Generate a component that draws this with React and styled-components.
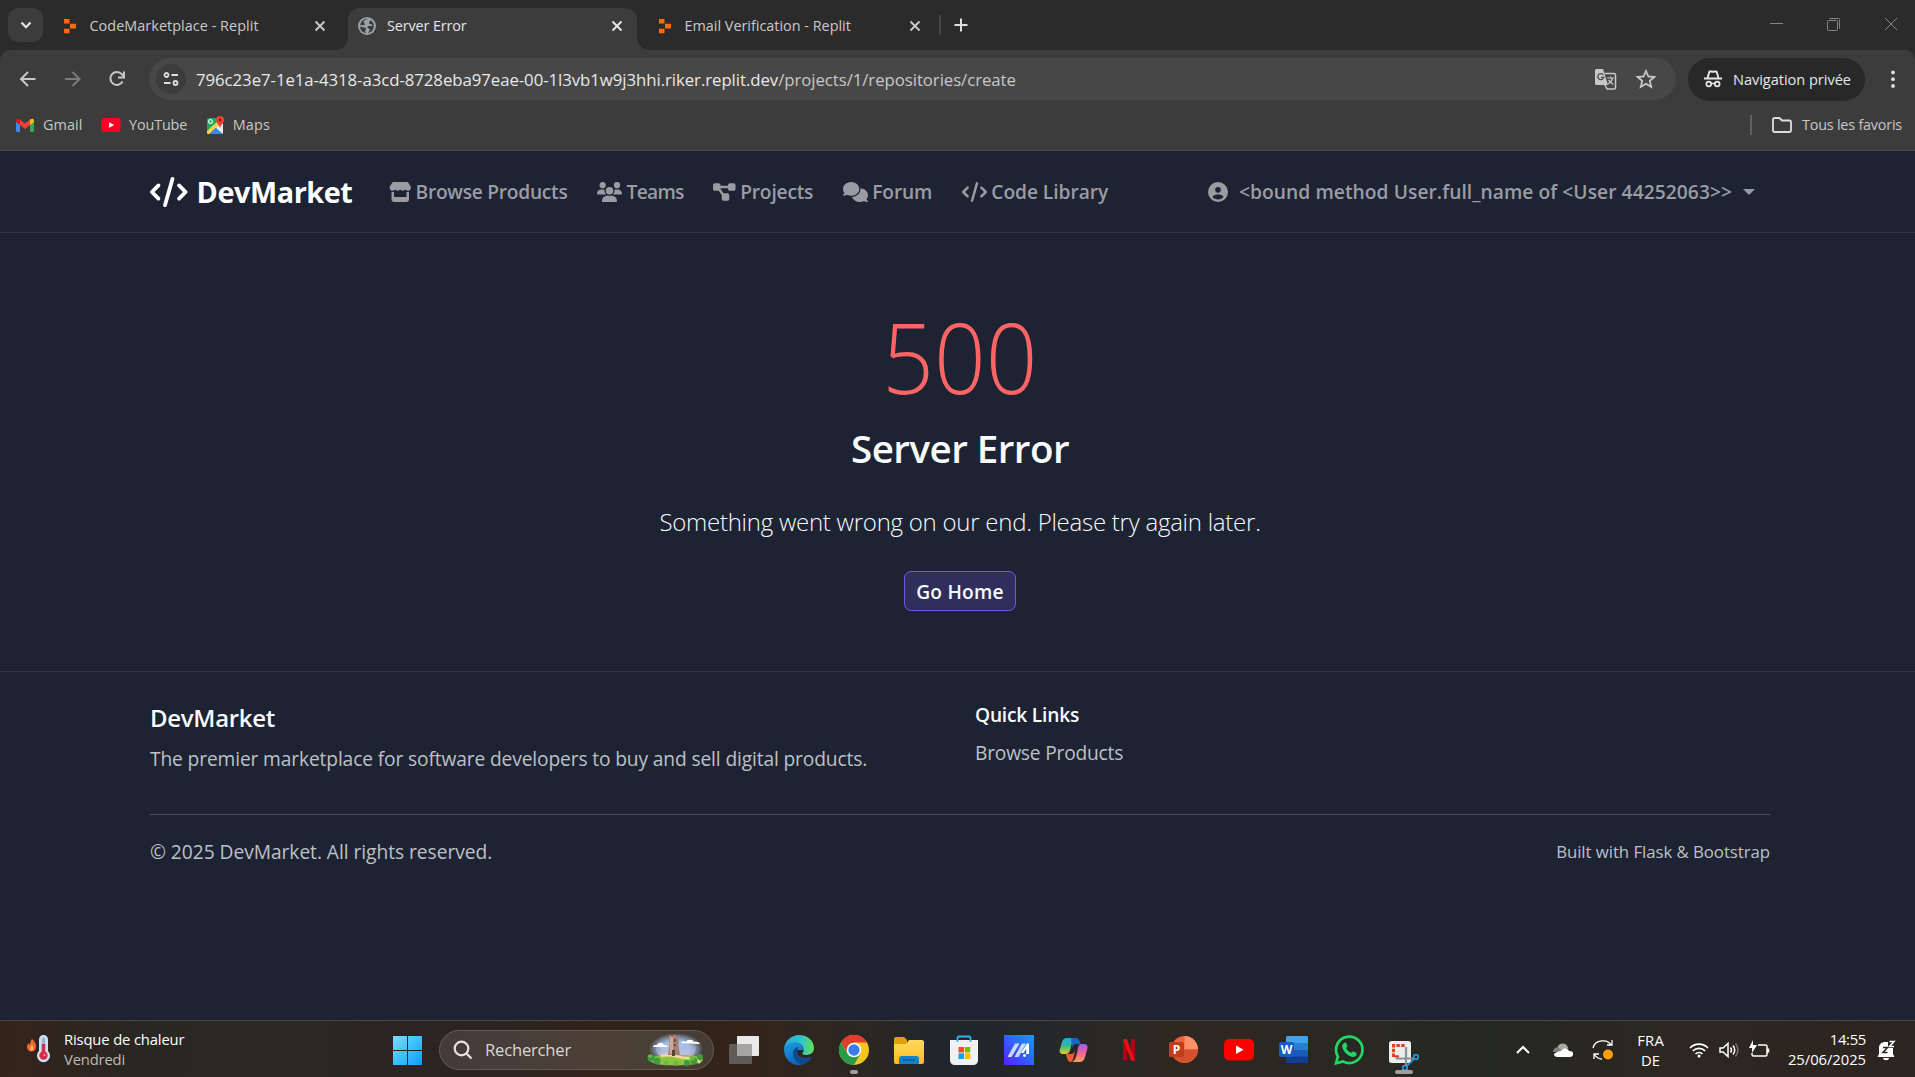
import React from "react";
import styled, { createGlobalStyle, css } from "styled-components";
import { FaCode, FaStore, FaUsers, FaDiagramProject, FaComments, FaCircleUser } from "react-icons/fa6";

const Global = createGlobalStyle`
  * { box-sizing: border-box; }
  body { margin: 0; background: #1d2333; font-family: "Open Sans", "Noto Sans", sans-serif; overflow: hidden; }
  svg { display: block; flex: none; }
`;
const type = (size, line, weight = 400, spacing = 0) => css`
  font-size: ${size}px; line-height: ${line}px; font-weight: ${weight}; letter-spacing: ${spacing}px; white-space: nowrap;
`;
const Label = styled.span`letter-spacing: ${p => p.$ls || 0}px;`;

const Screen = styled.div`width: 1915px; height: 1077px; display: flex; flex-direction: column;`;

/* browser chrome */
const TabStrip = styled.div`height: 50px; background: #2b2b2b; display: flex; padding: 8px 16px 0 8px;`;
const TabSearch = styled.div`width: 35px; height: 34px; border-radius: 10px; background: #3c3c3c; display: grid; place-items: center; margin-right: 7.5px;`;
const Tabs = styled.div`display: flex; gap: 8.5px;`;
const Tab = styled.div`
  width: 289px; height: 42px; padding: 0 12px 7px 10px; display: flex; align-items: center; gap: 11px; position: relative;
  border-radius: 12px 12px 0 0; color: ${p => (p.$active ? "#e6e6e6" : "#c9c9c9")};
  ${p => p.$active && css`
    background: #3c3c3c;
    &::before, &::after { content: ""; position: absolute; bottom: 0; width: 12px; height: 12px; }
    &::before { left: -12px; background: radial-gradient(circle at 0 0, transparent 11.5px, #3c3c3c 12px); }
    &::after { right: -12px; background: radial-gradient(circle at 100% 0, transparent 11.5px, #3c3c3c 12px); }
  `}
`;
const TabTitle = styled.span`flex: 1; min-width: 0; ${p => type(14.4, 20, 400, p.$ls)}`;
const TabDivider = styled.div`width: 2px; height: 20px; margin: 7px 12px 0 4px; background: #454545;`;
const NewTab = styled.div`padding-top: 9px;`;
const WindowControls = styled.div`margin-left: auto; display: flex; gap: 41px; padding-top: 8px;`;

const ToolbarBase = styled.div`background: #2b2b2b;`;
const Toolbar = styled.div`height: 58px; background: #3c3c3c; display: flex; align-items: center; padding: 0 14px 0 18px; border-radius: 10px 10px 0 0;`;
const NavButtons = styled.div`display: flex; gap: 24.5px; width: 131px; color: #c7c7c7;`;
const Omnibox = styled.div`width: 1527px; height: 42px; border-radius: 21px; background: #474747; display: flex; align-items: center; padding: 0 19px 0 7px; color: #c7c7c7;`;
const SiteInfo = styled.div`width: 30px; height: 30px; border-radius: 50%; background: #3c3c3c; display: grid; place-items: center; margin-right: 10px;`;
const Url = styled.span`flex: 1; padding-top: 1px; ${type(16.8, 24, 400, -0.06)} color: #c7c7c7;`;
const Host = styled.span`color: #e8e8e8;`;
const OmniActions = styled.div`display: flex; gap: 18px; align-items: center;`;
const PrivateChip = styled.div`width: 177px; height: 43px; border-radius: 22px; background: #282828; margin-left: 12px; padding-left: 15px; display: flex; align-items: center; gap: 10px; color: #e6e6e6; ${type(14.6, 20, 400, 0)}`;
const MenuDots = styled.div`margin-left: auto;`;
const Bookmarks = styled.div`height: 43px; background: #3c3c3c; border-bottom: 1px solid #4a4b48; display: flex; padding: 6px 13px 0 15px; color: #c7c7c7;`;
const Bookmark = styled.div`display: flex; align-items: center; height: 22px; gap: 8px; margin-right: 18.5px; ${type(14.4, 20, 400, 0)}`;
const AllBookmarks = styled.div`margin-left: auto; display: flex; align-items: center; height: 22px; gap: 9px; ${type(14.4, 20, 400, 0)}
  &::before { content: ""; width: 2px; height: 20px; background: #5f5f5f; margin-right: 10px; }`;

/* site */
const Site = styled.div`flex: 1; background: #1d2333; color: #f8fafc; display: flex; flex-direction: column;`;
const Navbar = styled.nav`height: 82px; border-bottom: 1px solid #323746; padding: 0 160px 0 150px; display: flex; align-items: center;`;
const Brand = styled.div`display: flex; align-items: center; gap: 9px; color: #fff; width: 238.5px; ${type(28.8, 36, 700, -0.42)}
  svg { width: 37.5px; height: 30px; }`;
const NavItem = styled.div`display: flex; align-items: center; gap: 4.5px; color: #9b9ca3; margin-right: 29.5px; ${p => type(19.2, 30, 600, p.$ls)}
  svg { width: ${p => p.$icon}px; height: 20px; }`;
const UserMenu = styled(NavItem)`margin: 0 0 0 auto; gap: 11px;`;
const Caret = styled.i`border: 6px solid transparent; border-top-color: currentColor; border-bottom: 0;`;
const Hero = styled.main`height: 438px; display: flex; flex-direction: column; align-items: center; padding-left: 5px;`;
const Code = styled.h1`margin: 63px 0 0; color: #ff6464; transform: scaleX(0.925); ${type(98, 120, 300, 0)}`;
const Title = styled.h2`margin: 8px 0 0; ${type(38.6, 48, 600, -0.55)}`;
const Lead = styled.p`margin: 31px 0 0; ${type(24, 38, 300, -0.25)}`;
const HomeButton = styled.button`margin: 30px 0 0; width: 112px; height: 40px; padding: 1px 0 0; border: 1px solid #7158ec; border-radius: 7px; background: #302e5b; color: #f8fafc; font-family: inherit; ${type(19.2, 37, 600, 0.2)}`;
const Footer = styled.footer`border-top: 1px solid #323746; padding: 30px 145px 0 150px; color: #bdc0c6;`;
const Columns = styled.div`display: grid; grid-template-columns: 825px 1fr; height: 112px;`;
const FootBrand = styled.h5`margin: 0; color: #f8fafc; ${type(24, 32, 600, -0.3)}`;
const FootText = styled.p`margin: 10px 0 0; ${type(19.2, 30, 400, -0.13)}`;
const FootHead = styled.h6`margin: 0; color: #f8fafc; ${type(19.2, 26, 600, -0.22)}`;
const FootLink = styled.a`display: block; margin-top: 10px; ${type(19.2, 30, 400, -0.2)}`;
const Legal = styled.div`border-top: 1px solid #4b505d; display: flex; justify-content: space-between; padding-top: 22px; ${type(19.2, 30, 400, -0.04)}`;
const Built = styled.small`${type(16.8, 30, 400, -0.05)}`;

/* taskbar */
const Taskbar = styled.div`height: 57px; border-top: 1px solid #4b4641; display: flex; align-items: center; padding: 2px 19px 0 26px; color: #fff;
  background: linear-gradient(90deg, #35231a 0, #292723 7%, #2b2822 14%, #2a2424 22%, #32231b 31%, #33241a 39%, #2a2723 46%, #20262b 49%, #24272a 54%, #2e2821 61%, #292822 72%, #252721 78%, #2d2721 88%, #2b2421 100%);`;
const Weather = styled.div`display: flex; width: 367px; gap: 12px; align-items: center; padding-bottom: 2px;`;
const Stack = styled.div`${type(14.8, 20, 400, 0)} text-align: ${p => p.$align || "left"}; color: #fff;`;
const Clock = styled(Stack)`padding-bottom: 2px;`;
const Muted = styled.div`color: #bebab5;`;
const SearchBox = styled.div`width: 275px; height: 40px; border-radius: 20px; margin: 0 15px 0 17px; padding: 0 9px 0 13px; display: flex; align-items: center; border: 1px solid #665a55;
  background: linear-gradient(90deg, #443b3a, #4c4036 60%, #453c33); color: #d9d6d3; ${type(16.6, 24, 400, -0.2)}`;
const SearchText = styled.span`margin-left: 12px; flex: 1;`;
const Dock = styled.div`display: flex; gap: 25px;`;
const DockItem = styled.div`width: 30px; height: 30px; position: relative;
  ${p => p.$dot && css`&::after { content: ""; position: absolute; top: 35px; left: ${(30 - p.$dot) / 2}px; width: ${p.$dot}px; height: 4px; border-radius: 2px; background: #a09d9b; }`}`;
const Tray = styled.div`margin-left: auto; display: flex; align-items: center;`;
const Gap = styled.div`width: ${p => p.$w}px;`;
const Status = styled.div`display: flex; gap: 10px;`;

const Svg = ({ w = 16, h = w, box, children, ...r }) => <svg width={w} height={h} viewBox={box || `0 0 ${w} ${h}`} fill="none" {...r}>{children}</svg>;
const Close = () => <Svg w={16} stroke="currentColor" strokeWidth="1.9"><path d="M3.500 3.500l9 9M12.500 3.500l-9 9" /></Svg>;
const Replit = () => <Svg w={18}><path fill="#ff6a0a" d="M3 2h5.500v4.500H3zM9 6.800h6v4.600H9zM3 11.700h5.500v4.500H3z" /></Svg>;
const Globe = () => <Svg w={18}><circle cx="9" cy="9" r="9" fill="#9aa0a6" /><path fill="#3c3c3c" d="M10.500 2c-2 .2-4.500 1-4.800 2.400-.2 1.500 1.200 2 1.200 3C6 8.600 3.600 8 2 8a7.200 7.200 0 0 1 8.500-6zM2 9.500c2 1.200 5.500.3 6 2 .5 1.200-1 1.600-.9 2.700.1.900.8 1.300.7 2A7.200 7.200 0 0 1 2 9.500zM12.500 3a7.200 7.200 0 0 1-2.200 13c-.3-1.200 1.700-1.700 1.500-3.200-.2-1.300-2.300-1.200-2.300-2.600 0-1.700 2.500-1.300 3.800-1.100.9.100 1.400-.4.900-1.200-.7-1-3.200-.2-3.300-1.900 0-1.300 1.400-1.600 1.600-3z" /></Svg>;
const YouTube = ({ w, h }) => <Svg w={w} h={h} box="0 0 30 22"><rect width="30" height="22" rx="5" fill="#ff0022" /><path d="M12 6.500v9l8-4.500z" fill="#fff" /></Svg>;
const Gmail = () => <Svg w={20} h={16}><path fill="#4285f4" d="M1 4v9.500c0 .8.6 1.500 1.500 1.500H5V6z" /><path fill="#34a853" d="M15 6v9h2.500c.9 0 1.500-.7 1.500-1.500V4z" /><path fill="#ea4335" d="M5 2.500l5 4 5-4V8l-5 4-5-4z" /><path fill="#c5221f" d="M1 3.500c0-2 2.200-2.300 4-1V8L1 5z" /><path fill="#fbbc04" d="M19 3.500c0-2-2.200-2.300-4-1V8l4-3z" /></Svg>;
const Maps = () => <Svg w={19} h={20}><clipPath id="mp"><rect x="1" y="3" width="16" height="16" rx="1.500" /></clipPath><g clipPath="url(#mp)"><path fill="#1fa463" d="M0 2h18v18H0z" /><path fill="#e8eaed" d="M11 11l7-3v12l-8-7z" /><path fill="#ffd24a" d="M0 17L13 5l3 2L2 20H0z" /><path fill="#4285f4" d="M3 20l7-7 7 7z" /></g><circle cx="4.500" cy="6.500" r="1.900" stroke="#dff3e6" strokeWidth="1.200" /><path fill="#ea4335" d="M14 1a4 4 0 0 0-4 4c0 3 3 4.500 4 8 1-3.500 4-5 4-8a4 4 0 0 0-4-4z" /><circle cx="14" cy="5" r="1.400" fill="#811411" /></Svg>;

const Castle = () => <Svg w={57} h={32}>
  <defs><radialGradient id="sky"><stop offset=".5" stopColor="#a9c6e8" /><stop offset=".8" stopColor="#8aa6c8" stopOpacity=".6" /><stop offset="1" stopColor="#8aa6c8" stopOpacity="0" /></radialGradient><linearGradient id="dusk" y2="1" x2="0"><stop stopColor="#7faee0" stopOpacity="0" /><stop offset="1" stopColor="#e5bfe3" /></linearGradient></defs>
  <ellipse cx="29" cy="15" rx="27" ry="16" fill="url(#sky)" /><ellipse cx="29" cy="15" rx="20" ry="12" fill="url(#dusk)" />
  <path fill="#fff" d="M6 13c0-2 3-2 4-2 1-3 6-3 7 0 2 0 4 1 4 2zM34 9c1-2 3-2 5-1 1-3 7-3 8 0 3-.5 5 0 6 2z" />
  <ellipse cx="29" cy="26" rx="27" ry="5.500" fill="#8fc23c" /><path d="M14 22c10-3 18 2 25 2s12 2 14 5" stroke="#f1d9a4" strokeWidth="2.500" />
  <path fill="#a77f72" d="M22 1h2v1.500h2V1h3v1.500h2V1h1l-.5 10 1.500 10H21l1.500-10z" /><path fill="#d0a796" d="M23 3h3v17h-3z" /><path fill="#5d4038" d="M25 16h3v6h-3zM27 5h1.500v3H27zM27 10h1.500v2H27z" />
  <g fill="#3f9b3f"><circle cx="4" cy="24" r="3.500" /><circle cx="10" cy="27" r="3.500" /><circle cx="40" cy="29" r="3" /><circle cx="47" cy="27" r="3.500" /><circle cx="53" cy="23" r="3" /></g>
  <g fill="#6dbb45"><circle cx="19" cy="29" r="2.500" /><circle cx="29" cy="29" r="2.500" /><circle cx="45" cy="24" r="2.500" /><circle cx="3" cy="22" r="1.800" /></g></Svg>;

const dock = [
  ["task"], ["edge"], ["chrome", 8], ["files"], ["store"], ["asus"], ["copilot"], ["netflix"], ["ppt"], ["yt"], ["word"], ["wa"], ["snip", 18],
];
const art = {
  task: <><rect x="8" y="1" width="22" height="20" rx="1" fill="#e9e9e9" /><rect x="0" y="9" width="23" height="20" rx="1.500" fill="#5e5b59" /><path d="M8 9h15v12H8z" fill="#a6a5a4" /></>,
  edge: <><defs><linearGradient id="e1" x2="1"><stop stopColor="#2aa5dd" /><stop offset=".55" stopColor="#2fc3d0" /><stop offset="1" stopColor="#63e04f" /></linearGradient><linearGradient id="e2" x2=".4" y2="1"><stop stopColor="#1b9de2" /><stop offset="1" stopColor="#0f63bd" /></linearGradient></defs>
    <path fill="url(#e2)" d="M0 14C1 9 5 7 10 7c6 0 9 4 9 8H12c-1 6 6 10 15 7-3 5-7 8-12 8C6 30 0 23 0 14z" /><path fill="#104a8c" d="M13 12c-7 3-4 16 5 17.500 4-.5 8-4 10-7-.5-1-8 3-13-1.500-2-2-2.500-6-.5-8z" /><path fill="url(#e1)" d="M0 14C1 5 8 0 15 0c9 0 15 6 15 13 0 5-4 7-8 7-3 0-4-1-3.500-2 2-2 1-6-1-8C13 6 4 6 0 14z" /></>,
  chrome: <><circle cx="15" cy="15" r="15" fill="#fcc31e" /><path fill="#e33b2e" d="M2 7.500A15 15 0 0 1 28 7.500H15L8.500 18z" /><path fill="#2a9b49" d="M2 7.500A15 15 0 0 0 15 30l6.500-11.500L15 22l-6.500-3.500z" /><circle cx="15" cy="15" r="7.300" fill="#fff" /><circle cx="15" cy="15" r="5.700" fill="#3b7cec" /></>,
  files: <><path fill="#e0a106" d="M0 4c0-1 .7-2 2-2h8l3 3v6H0z" /><path fill="url(#fg)" d="M0 9h12l3-4h13c1.300 0 2 1 2 2v20c0 1-.7 2-2 2H2c-1.300 0-2-1-2-2z" /><defs><linearGradient id="fg" x2="0" y2="1"><stop stopColor="#ffd95c" /><stop offset="1" stopColor="#fcbd1f" /></linearGradient></defs><path fill="#1480d0" d="M5 29v-5c0-2 1-3 3-3h14c2 0 3 1 3 3v5z" /><path stroke="#0b4f8e" strokeWidth="1.200" d="M9 25h12" /></>,
  store: <><path d="M8.500 7V3c0-1 .5-1.500 1.500-1.500h10c1 0 1.500.5 1.500 1.500v4" stroke="#35b4e8" strokeWidth="1.800" /><path fill="#f1f1f1" d="M1 5h28v20c0 3-2 5-5 5H6c-3 0-5-2-5-5z" /><path d="M8.500 5v2M21.500 5v2" stroke="#35b4e8" strokeWidth="1.800" /><path fill="#f04f22" d="M9.500 12H15v5.500H9.500z" /><path fill="#7fba00" d="M15.800 12h5.500v5.500h-5.500z" /><path fill="#00a3ee" d="M9.500 18.300H15V24H9.500z" /><path fill="#ffb900" d="M15.800 18.300h5.500V24h-5.500z" /></>,
  asus: <><defs><linearGradient id="ag" x1="0" y1="1" x2="1" y2="0"><stop stopColor="#5a1dff" /><stop offset=".5" stopColor="#3160ff" /><stop offset="1" stopColor="#129cff" /></linearGradient></defs><path fill="url(#ag)" d="M0 0h30v30H0z" /><path fill="#cdd8ff" d="M3.500 22L11 8.500h4.500L7.500 22zM10.500 22L18 8.500h4L14.500 22z" /><path fill="#fff" d="M17 18l6-9.500h2V19h-2.800v-5.500L19.500 18z" /><circle cx="20.500" cy="20.500" r="1.400" fill="#fff" /></>,
  copilot: <><defs><linearGradient id="c1" x2="0" y2="1"><stop stopColor="#20a7f0" /><stop offset=".5" stopColor="#35bd8c" /><stop offset="1" stopColor="#eecb25" /></linearGradient><linearGradient id="c2" x2="0" y2="1"><stop stopColor="#a05ae8" /><stop offset=".5" stopColor="#ef659a" /><stop offset="1" stopColor="#ff9b53" /></linearGradient></defs><path fill="url(#c1)" d="M8 3h9c-3 1-4 5-5 9s-2 7-5 7H5c-4 0-5-2-4-5l2-7c1-3 2-4 5-4z" /><path fill="#1767c9" d="M12 3h5c2 0 3 1 4 4l.5 2H17c-3 0-3 2-4 4z" /><path fill="url(#c2)" d="M22 9h3c4 0 4 3 3 6l-2 7c-1 4-3 5-6 5h-7c3-1 4-5 5-9s1-9 4-9z" /><path fill="#ef5a35" d="M7 19h4c4 0 4-2 5-3l-1 5c-1 4-2 6-3 6-2 0-3-1-4-4z" /></>,
  netflix: <><path fill="#a50913" d="M9 4h4v21l-4 1zM17 4h4v22l-4-1z" /><path fill="#f00b18" d="M9 4h4l8 22-4-.7z" /></>,
  ppt: <><circle cx="15.500" cy="14.500" r="13.500" fill="#e9633f" /><path fill="#ff9169" d="M15.500 1A13.500 13.500 0 0 1 29 14.500H15.500z" /><path fill="#d5512c" d="M29 14.500a13.500 13.500 0 0 1-24 8l10.500-8z" /><rect y="7" width="15" height="15" rx="1.500" fill="#c43e1c" /></>,
  yt: <><rect y="4" width="30" height="21.500" rx="5" fill="#f00" /><path d="M12 10.500v8.500l7.500-4.250z" fill="#fff" /></>,
  word: <><rect x="7" y="1" width="22" height="27" rx="1.500" fill="#103f91" /><path fill="#3fa4ea" d="M7 2.500C7 1.500 8 1 9 1h18.500c1 0 1.500.5 1.500 1.500V8H7z" /><path fill="#2b7cd3" d="M7 8h22v7H7z" /><path fill="#185abd" d="M7 15h22v6.500H7z" /><rect y="7" width="15" height="15" rx="1.500" fill="#185abd" /></>,
  wa: <><path d="M2 28.300l1.900-6.800A13.200 13.200 0 1 1 9 26.400z" stroke="#25d366" strokeWidth="2.700" /><path fill="#25d366" d="M10 8c1-1 2-.7 2.400.2l1 2.500c.3.800-1.300 2-1.200 2.500 1.100 2.200 2.800 3.700 5 4.600.6.200 1.500-1.700 2.200-1.400l2.800 1.400c1 .5.300 2.700-.7 3.400-2.500 1.800-6 .2-8.800-2.200-2.600-2.300-4.700-5.500-4.500-8 .1-1.200.8-2.200 1.800-3z" /></>,
};
const Letter = styled.b`position: absolute; left: 0; top: 7px; width: 15px; text-align: center; ${type(12, 15, 700, 0)}`;
const Snip = () => <Svg w={30} h={37}><rect y="6" width="22" height="22" rx="2.500" fill="#ededed" /><path d="M4.500 22V10.500H16" stroke="#e0431b" strokeWidth="3" strokeDasharray="3.500 1.300" /><path d="M6 21.500h4" stroke="#e0431b" strokeWidth="2.500" /><path d="M17 12v18M7 23.500h17" stroke="#8d9298" strokeWidth="2.200" /><circle cx="27" cy="22" r="2.300" stroke="#2299e0" strokeWidth="1.700" /><circle cx="16" cy="33" r="2.300" stroke="#2299e0" strokeWidth="1.700" /><path d="M18 31l7-7" stroke="#2299e0" strokeWidth="1.700" /></Svg>;

export default function App() {
  return (
    <Screen>
      <Global />
      <TabStrip>
        <TabSearch><Svg w={14} stroke="#e3e3e3" strokeWidth="2.200"><path d="M2.500 4.500L7 9.200l4.500-4.700" /></Svg></TabSearch>
        <Tabs>
          <Tab><Replit /><TabTitle $ls={0.05}>CodeMarketplace - Replit</TabTitle><Close /></Tab>
          <Tab $active><Globe /><TabTitle $ls={-0.12}>Server Error</TabTitle><Close /></Tab>
          <Tab><Replit /><TabTitle $ls={0}>Email Verification - Replit</TabTitle><Close /></Tab>
        </Tabs>
        <TabDivider />
        <NewTab><Svg w={16} stroke="#dedede" strokeWidth="2"><path d="M8 1.500v13M1.500 8h13" /></Svg></NewTab>
        <WindowControls>
          <Svg w={16} stroke="#858585"><path d="M1 7.500h13" /></Svg>
          <Svg w={16} stroke="#858585"><rect x="1.500" y="4.500" width="10" height="10" rx="1" /><path d="M3.500 2.500h9a1 1 0 0 1 1 1v9" /></Svg>
          <Svg w={16} stroke="#858585"><path d="M2 2l12 12M14 2L2 14" /></Svg>
        </WindowControls>
      </TabStrip>
      <ToolbarBase>
        <Toolbar>
          <NavButtons>
            <Svg w={20} stroke="#c7c7c7" strokeWidth="2"><path d="M17.500 10H3.500M10 3L3 10l7 7" /></Svg>
            <Svg w={20} stroke="#7b7b7b" strokeWidth="2"><path d="M2 10h14.500M9.500 3l7 7-7 7" /></Svg>
            <Svg w={20} stroke="#c7c7c7" strokeWidth="2"><path d="M15.600 12.500a6.500 6.500 0 1 1-.8-7.300l1.500 1.800" /><path d="M17 2.500v6h-6" /></Svg>
          </NavButtons>
          <Omnibox>
            <SiteInfo><Svg w={18} stroke="#dedede" strokeWidth="1.800"><circle cx="4.500" cy="5" r="2" /><path d="M9.500 5H16M2 13h6.500" /><circle cx="13.500" cy="13" r="2" /></Svg></SiteInfo>
            <Url><Host>796c23e7-1e1a-4318-a3cd-8728eba97eae-00-1l3vb1w9j3hhi.riker.replit.dev</Host>/projects/1/repositories/create</Url>
            <OmniActions>
              <Svg w={23}><path fill="#c7c7c7" d="M2.500 1H9l5 16H2.500A1.500 1.500 0 0 1 1 15.500v-13A1.500 1.500 0 0 1 2.500 1z" /><path d="M10.500 5.500H20A1.500 1.500 0 0 1 21.500 7v12.500A1.500 1.500 0 0 1 20 21h-7l-2-4" stroke="#c7c7c7" strokeWidth="1.500" /><path d="M9.300 7a3 3 0 1 0 .4 2.400H7" stroke="#474747" strokeWidth="1.300" /><path d="M13 10h7M16.500 8.500V10M18.500 10c-.7 3-2.500 4.800-4.500 6M14.500 12l4.500 4.500" stroke="#c7c7c7" strokeWidth="1.200" /></Svg>
              <Svg w={22} stroke="#c7c7c7" strokeWidth="1.800"><path d="M11 3l2.400 5.500 6 .5-4.600 3.900 1.400 5.900L11 15.700l-5.200 3.100 1.400-5.900L2.600 9l6-.5z" /></Svg>
            </OmniActions>
          </Omnibox>
          <PrivateChip>
            <Svg w={20}><path d="M1 9.500h18" stroke="#e6e6e6" strokeWidth="2" /><path d="M4.500 9L6.500 2.500c1-.6 2 .3 3.500.3s2.500-.9 3.500-.3L15.500 9" stroke="#e6e6e6" strokeWidth="1.900" /><circle cx="5.800" cy="15" r="2.400" stroke="#e6e6e6" strokeWidth="1.700" /><circle cx="14.200" cy="15" r="2.400" stroke="#e6e6e6" strokeWidth="1.700" /><path d="M8 14.500h4" stroke="#e6e6e6" strokeWidth="1.500" /></Svg>
            <Label $ls={-0.05}>Navigation privée</Label>
          </PrivateChip>
          <MenuDots><Svg w={16} h={20}><g fill="#dedede"><circle cx="8" cy="3.500" r="1.900" /><circle cx="8" cy="10.200" r="1.900" /><circle cx="8" cy="17" r="1.900" /></g></Svg></MenuDots>
        </Toolbar>
      </ToolbarBase>
      <Bookmarks>
        <Bookmark><Gmail /><Label $ls={0.1}>Gmail</Label></Bookmark>
        <Bookmark><YouTube w={20} h={14} /><Label $ls={-0.15}>YouTube</Label></Bookmark>
        <Bookmark><Maps /><Label $ls={0.2}>Maps</Label></Bookmark>
        <AllBookmarks><Svg w={22} h={18} stroke="#dedede" strokeWidth="1.800"><path d="M2 14.500v-11C2 2.500 2.500 2 3.500 2h5l2.500 2.500h7.500c1 0 1.500.5 1.500 1.500v8.500c0 1-.5 1.500-1.500 1.500h-15C2.500 16 2 15.500 2 14.500z" /></Svg><Label $ls={-0.21}>Tous les favoris</Label></AllBookmarks>
      </Bookmarks>
      <Site>
        <Navbar>
          <Brand><FaCode /><span>DevMarket</span></Brand>
          <NavItem $icon={22.5} $ls={-0.27}><FaStore /><span>Browse Products</span></NavItem>
          <NavItem $icon={25} $ls={-0.7}><FaUsers /><span>Teams</span></NavItem>
          <NavItem $icon={22.5} $ls={-0.2}><FaDiagramProject /><span>Projects</span></NavItem>
          <NavItem $icon={25} $ls={-0.14}><FaComments /><span>Forum</span></NavItem>
          <NavItem $icon={25} $ls={-0.05}><FaCode /><span>Code Library</span></NavItem>
          <UserMenu $icon={20} $ls={0.067}><FaCircleUser /><span>{"<bound method User.full_name of <User 44252063>>"}</span><Caret /></UserMenu>
        </Navbar>
        <Hero>
          <Code>500</Code>
          <Title>Server Error</Title>
          <Lead>Something went wrong on our end. Please try again later.</Lead>
          <HomeButton>Go Home</HomeButton>
        </Hero>
        <Footer>
          <Columns>
            <div><FootBrand>DevMarket</FootBrand><FootText>The premier marketplace for software developers to buy and sell digital products.</FootText></div>
            <div><FootHead>Quick Links</FootHead><FootLink>Browse Products</FootLink></div>
          </Columns>
          <Legal><span>© 2025 DevMarket. All rights reserved.</span><Built>Built with Flask &amp; Bootstrap</Built></Legal>
        </Footer>
      </Site>
      <Taskbar>
        <Weather>
          <Svg w={26} h={30}><path fill="#ef6a32" d="M6 5c3 2 4 5 4 8a4.500 4.500 0 0 1-9 0c0-2 1-3 2-4 0 1 .6 1.500 1 1.500C4.500 8 4.500 7 6 5z" /><path fill="#ffb95c" d="M6 11c1.500 1.500 2 5-.5 5.500C3 16 4 13 6 11z" /><path fill="#cfe2f5" d="M13 5.500a4.500 4.500 0 0 1 9 0V17a6.500 6.500 0 1 1-9 0z" /><path stroke="#97b5d0" strokeWidth="3.500" strokeLinecap="round" d="M17.500 5v10" /><path stroke="#d52b49" strokeWidth="3.500" d="M17.500 10v11" /><circle cx="17.500" cy="21.500" r="4.200" fill="#d52b49" /><circle cx="18.500" cy="21" r="1" fill="#ff9aac" /></Svg>
          <Stack><div><Label $ls={-0.15}>Risque de chaleur</Label></div><Muted><Label $ls={-0.17}>Vendredi</Label></Muted></Stack>
        </Weather>
        <Svg w={29}><defs><linearGradient id="wn" x2="1" y2="1"><stop stopColor="#7fdcff" /><stop offset=".5" stopColor="#3cc1fb" /><stop offset="1" stopColor="#1399fa" /></linearGradient></defs><path fill="url(#wn)" d="M0 0h14v14H0zM15 0h14v14H15zM0 15h14v14H0zM15 15h14v14H15z" /></Svg>
        <SearchBox>
          <Svg w={20} stroke="#e6e4e2" strokeWidth="2.200"><circle cx="8.500" cy="8.500" r="6.800" /><path d="M13.500 13.500l5 5" /></Svg>
          <SearchText>Rechercher</SearchText><Castle />
        </SearchBox>
        <Dock>
          {dock.map(([id, dot]) => <DockItem key={id} $dot={dot}>{id === "snip" ? <Snip /> : <Svg w={30}>{art[id]}</Svg>}{id === "ppt" && <Letter>P</Letter>}{id === "word" && <Letter>W</Letter>}</DockItem>)}
        </Dock>
        <Tray>
          <Svg w={16} stroke="#fff" strokeWidth="2"><path d="M2 11l6-6 6 6" /></Svg><Gap $w={22} />
          <Svg w={20} h={16}><path fill="#aaa7a3" d="M5 9C3 4 7 1 10 1.500c3 0 5 3 5.500 5z" /><path fill="#7f7d7a" d="M0 10c0-4 4-6 7-3l4 3z" /><path fill="#fff" d="M1 12c3-3 7-2 9-5 3-1 5 0 6 2 6-.5 5 6 1 6H5c-3 0-4-1-4-3z" /></Svg><Gap $w={19} />
          <Svg w={22} h={22}><path d="M1 9C3 0 16 0 19 6M20 1v5h-5M2 20v-5h5M2 15c2 3 4 5 8 5" stroke="#fff" strokeWidth="1.300" /><circle cx="16" cy="15.500" r="5" fill="#ff9d0a" /></Svg><Gap $w={23} />
          <Stack $align="center"><div><Label $ls={0.2}>FRA</Label></div><div>DE</div></Stack><Gap $w={25} />
          <Status>
            <Svg w={20} stroke="#fff" strokeWidth="1.600"><path d="M1 8a12.500 12.500 0 0 1 18 0M3.800 11a8.700 8.700 0 0 1 12.400 0M6.500 14a5 5 0 0 1 7 0" /><circle cx="10" cy="16" r="1.500" fill="#fff" stroke="none" /></Svg>
            <Svg w={20} stroke="#fff" strokeWidth="1.500"><path d="M1 8h3l5-4.500v13L4 12H1z" /><path d="M11.500 7.500q2 2.500 0 5M14 5.500q3.500 4.500 0 9" /><path d="M16.500 3.500q5 6.500 0 13" stroke="#777" /></Svg>
            <Svg w={22} h={20} stroke="#fff" strokeWidth="1.500"><path d="M9 5h7.500c1 0 1.500.5 1.500 1.500v8c0 1-.5 1.500-1.500 1.500h-12C3.500 16 3 15.500 3 14.500V13M19.500 8.500v4" /><path fill="#fff" stroke="none" d="M4 0v5h4l-5 8V8H0z" /></Svg>
          </Status><Gap $w={17} />
          <Clock $align="right"><div><Label $ls={-0.3}>14:55</Label></div><div><Label $ls={-0.05}>25/06/2025</Label></div></Clock><Gap $w={10} />
          <Svg w={20} h={22}><path fill="#fff" d="M3 15V9c0-4 3-6 6-6h3v6h5v6l1.500 3h-17zM7 19h6c0 3-6 3-6 0z" /><path d="M7 8.500h4.500L7 13.500h4.500" stroke="#2b2622" strokeWidth="1.500" /><path d="M13.500 2.500H18l-4.500 5H18" stroke="#fff" strokeWidth="1.500" /></Svg>
        </Tray>
      </Taskbar>
    </Screen>
  );
}
